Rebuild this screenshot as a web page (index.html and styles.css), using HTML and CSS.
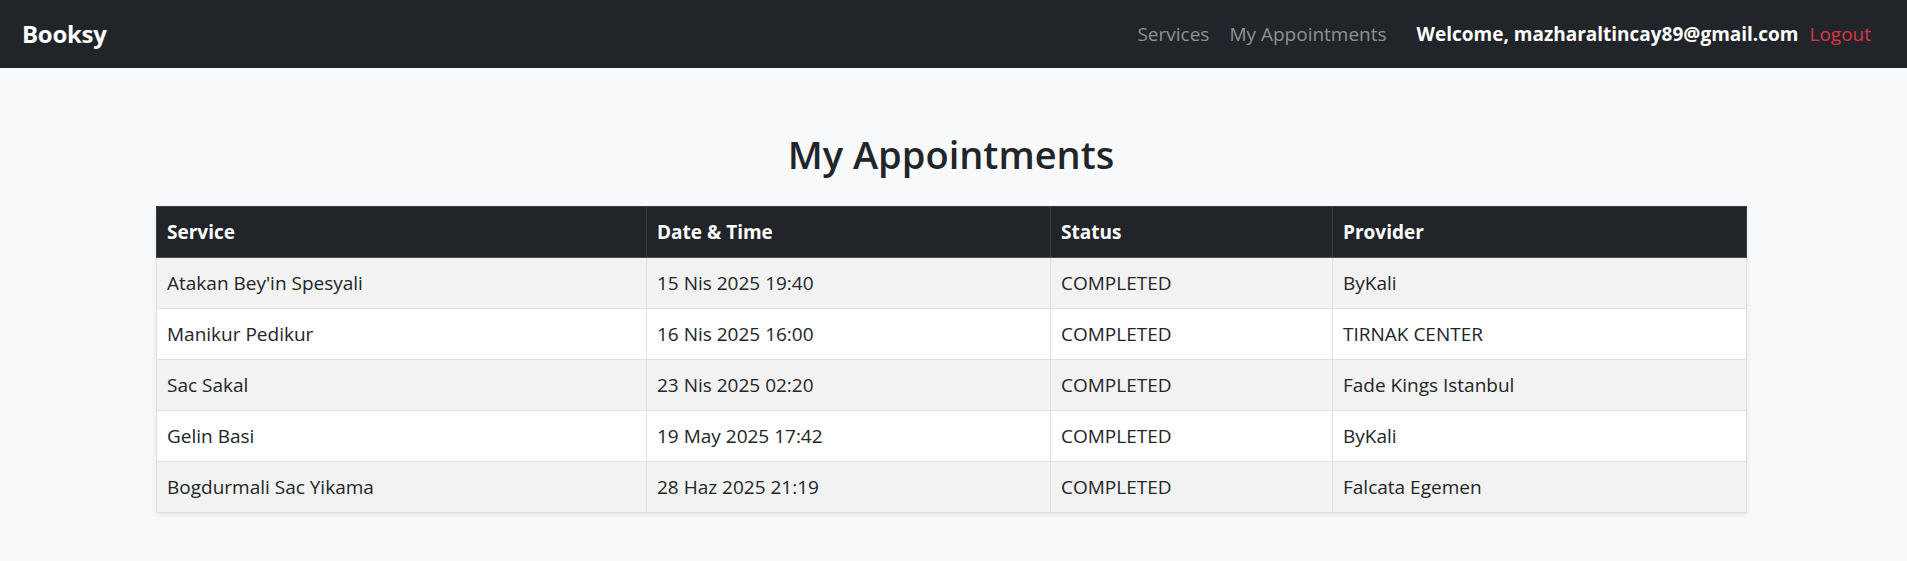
FILE: index.html
```html
<!DOCTYPE html>
<html lang="en">
<head>
<meta charset="utf-8">
<title>Booksy - My Appointments</title>
<link rel="stylesheet" href="styles.css">
</head>
<body>
<nav class="navbar">
  <a class="brand" href="#">Booksy</a>
  <div class="nav-right">
    <ul class="nav-links">
      <li><a href="#">Services</a></li>
      <li><a href="#">My Appointments</a></li>
    </ul>
    <span class="welcome">Welcome, mazharaltincay89@gmail.com</span>
    <a class="logout" href="#">Logout</a>
  </div>
</nav>
<main class="container">
  <h2 class="title">My Appointments</h2>
  <table class="appointments">
    <colgroup>
      <col class="c1"><col class="c2"><col class="c3"><col class="c4">
    </colgroup>
    <thead>
      <tr><th>Service</th><th>Date &amp; Time</th><th>Status</th><th>Provider</th></tr>
    </thead>
    <tbody>
      <tr><td>Atakan Bey'in Spesyali</td><td>15 Nis 2025 19:40</td><td>COMPLETED</td><td>ByKali</td></tr>
      <tr><td>Manikur Pedikur</td><td>16 Nis 2025 16:00</td><td>COMPLETED</td><td>TIRNAK CENTER</td></tr>
      <tr><td>Sac Sakal</td><td>23 Nis 2025 02:20</td><td>COMPLETED</td><td>Fade Kings Istanbul</td></tr>
      <tr><td>Gelin Basi</td><td>19 May 2025 17:42</td><td>COMPLETED</td><td>ByKali</td></tr>
      <tr><td>Bogdurmali Sac Yikama</td><td>28 Haz 2025 21:19</td><td>COMPLETED</td><td>Falcata Egemen</td></tr>
    </tbody>
  </table>
</main>
</body>
</html>
```
FILE: styles.css
```css
* { box-sizing: border-box; }

body {
  margin: 0;
  background: #f8f9fa;
  color: #212529;
  font-family: "Open Sans", "Noto Sans", "Liberation Sans", sans-serif;
  font-size: 19px;
  line-height: 1.5;
}

a { text-decoration: none; }

.navbar {
  height: 68px;
  background: #212529;
  display: flex;
  align-items: center;
  justify-content: space-between;
  padding: 0 36px 0 22px;
}

.brand {
  color: #fff;
  font-weight: 700;
  font-size: 24px;
  letter-spacing: -0.3px;
}

.nav-right {
  display: flex;
  align-items: center;
}

.nav-links {
  list-style: none;
  margin: 0 30px 0 0;
  padding: 0;
  display: flex;
  gap: 20px;
}

.nav-links a {
  color: #8f9194;
}

.welcome {
  color: #fff;
  font-weight: 700;
}

.logout {
  color: #dc3545;
  margin-left: 11px;
}

.container {
  padding: 0 161px 40px 156px;
}

.title {
  margin: 62px 0 28px;
  text-align: center;
  font-size: 38px;
  font-weight: 600;
  line-height: 48px;
  color: #212529;
}

.appointments {
  width: 100%;
  border-collapse: collapse;
  table-layout: fixed;
  box-shadow: 0 2px 5px rgba(0, 0, 0, 0.09);
}

.c1 { width: 490px; }
.c2 { width: 404px; }
.c3 { width: 282px; }
.c4 { width: 414px; }

.appointments th,
.appointments td {
  height: 51px;
  padding: 0 10px;
  text-align: left;
  vertical-align: middle;
  white-space: nowrap;
}

.appointments th {
  background: #212529;
  color: #fff;
  font-weight: 700;
  border: 1px solid #3a3f44;
  border-bottom-color: #4a4f55;
}

.appointments td {
  border: 1px solid #dee2e6;
  background: #fff;
  color: #212529;
}

.appointments tbody tr:nth-child(odd) td {
  background: #f2f2f2;
}
```
